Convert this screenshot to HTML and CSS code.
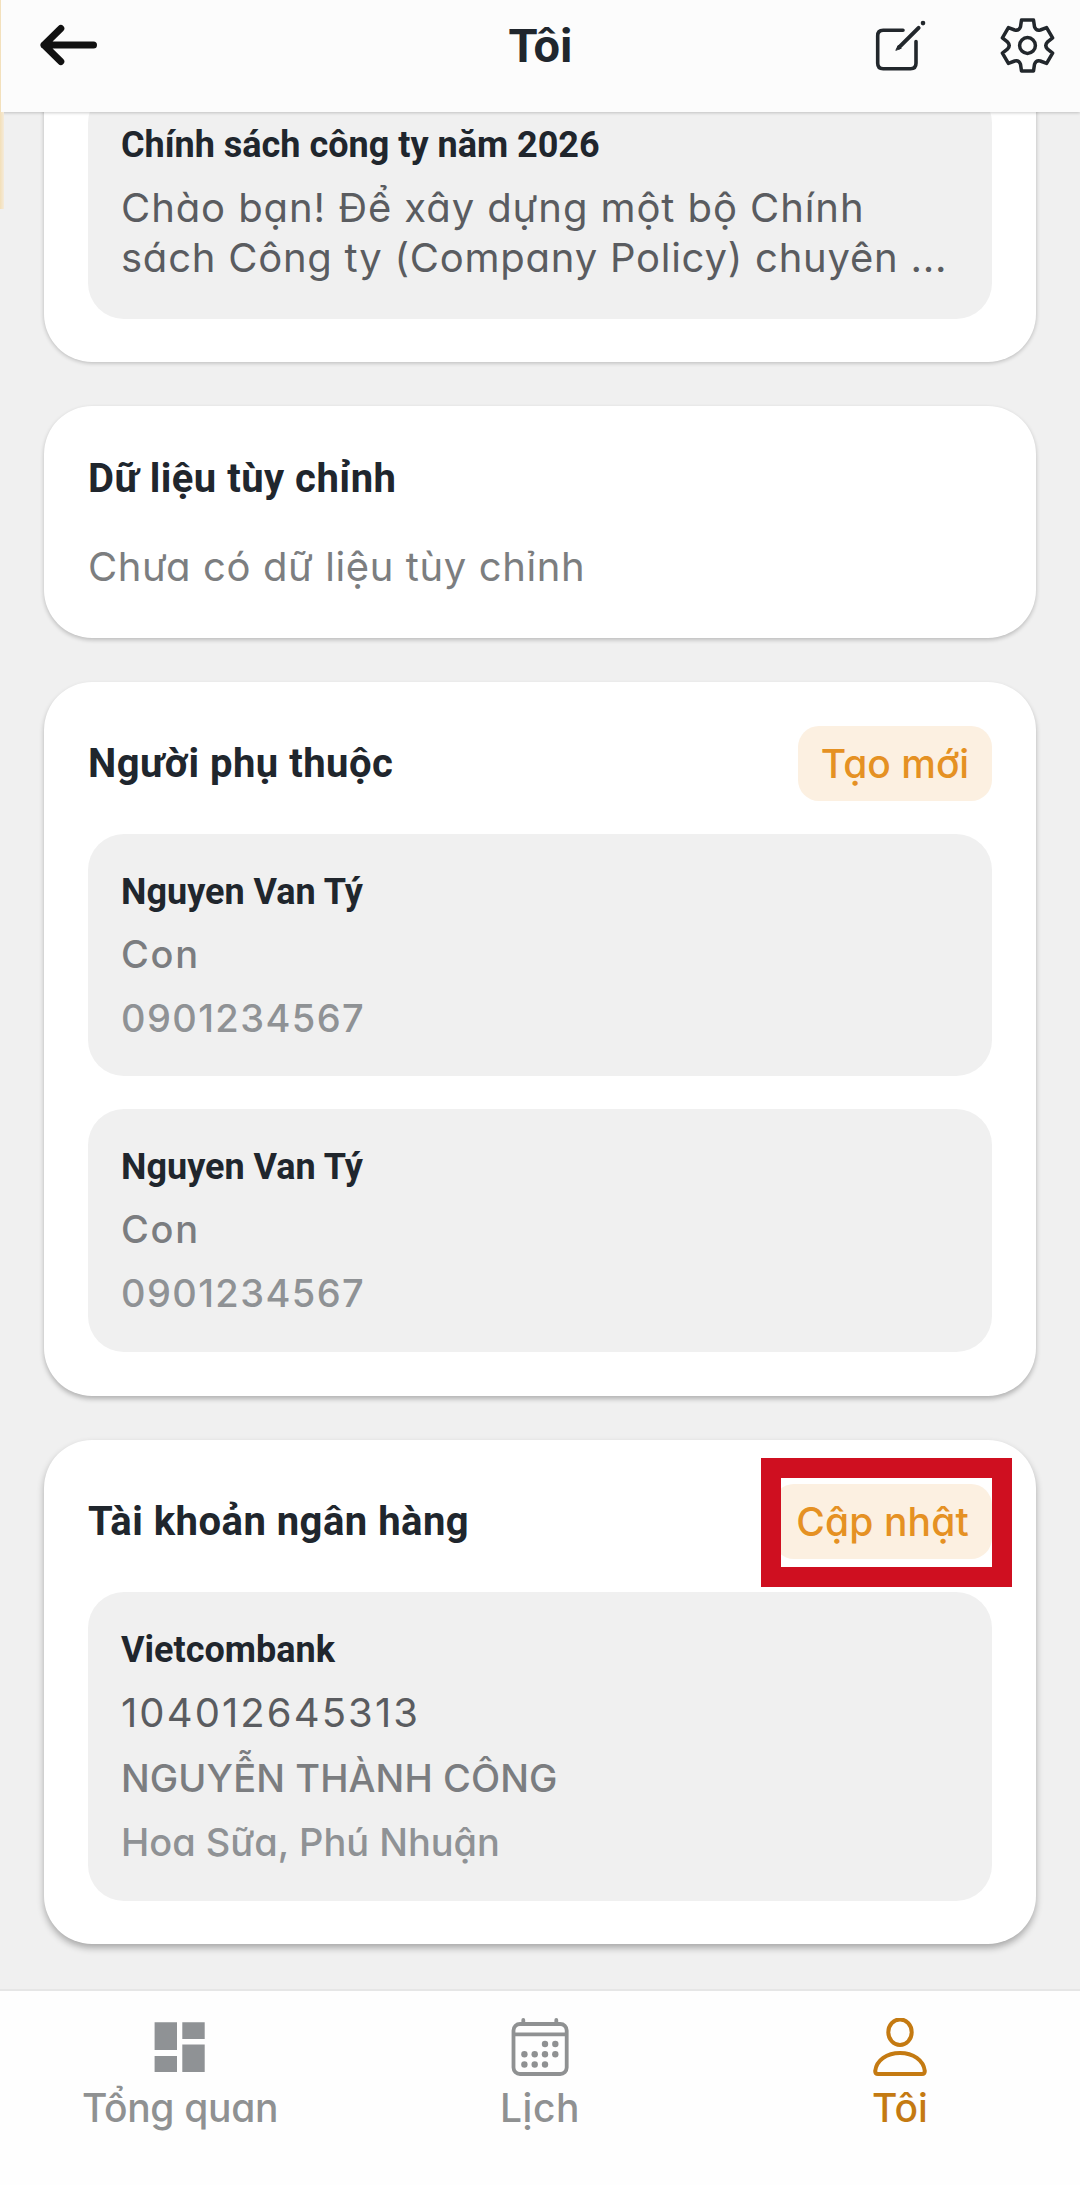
FILE: index.html
```html
<!DOCTYPE html>
<html lang="vi">
<head>
<meta charset="utf-8">
<title>Tôi</title>
<link rel="stylesheet" href="styles.css">
</head>
<body>
<div class="screen">
  <header class="header">
    <svg class="icon back" viewBox="0 0 60 60" fill="none" stroke="#111" stroke-width="7" stroke-linecap="round" stroke-linejoin="round"><path d="M55.5 30H6M22.8 13.5L6 30L22.8 46.5"/></svg>
    <h1 class="header-title">Tôi</h1>
    <div class="header-actions">
      <svg class="icon" viewBox="0 0 60 60" fill="none" stroke="#22272c" stroke-width="3.6" stroke-linecap="round" stroke-linejoin="round"><path d="M33 15.3H13.2Q7.7 15.3 7.7 20.8V48.2Q7.7 53.7 13.2 53.7H40.5Q46 53.7 46 48.2V26.5"/><path d="M29 32.3L48.6 12.8" stroke-width="4"/><path d="M26 35L28.3 30.3L31 33Z" stroke-width="1" fill="#22272c"/><path d="M53 8.1H53.01" stroke-width="4.6"/></svg>
      <svg class="icon" viewBox="-30.5 -30.5 60 60" fill="none" stroke="#22272c" stroke-width="3.5" stroke-linejoin="round"><path d="M-6-25.5L6-25.5L7-18.8Q8.4-14.6 12.8-15.5L19.1-17.9L25.1-7.6L19.8-3.3Q16.8 0 19.8 3.3L25.1 7.6L19.1 17.9L12.8 15.5Q8.4 14.6 7 18.8L6 25.5L-6 25.5L-7 18.8Q-8.4 14.6-12.8 15.5L-19.1 17.9L-25.1 7.6L-19.8 3.3Q-16.8 0-19.8-3.3L-25.1-7.6L-19.1-17.9L-12.8-15.5Q-8.4-14.6-7-18.8Z"/><circle r="7.9"/></svg>
    </div>
  </header>

  <main class="content">
    <section class="card policy">
      <article class="item">
        <h3 class="item-title">Chính sách công ty năm 2026</h3>
        <p class="policy-text"><span class="line-a">Chào bạn! Để xây dựng một bộ Chính</span><br><span class="line-b">sách Công ty (Company Policy) chuyên ...</span></p>
      </article>
    </section>

    <section class="card custom">
      <h2 class="card-title">Dữ liệu tùy chỉnh</h2>
      <p class="empty">Chưa có dữ liệu tùy chỉnh</p>
    </section>

    <section class="card dependents">
      <div class="card-head">
        <h2 class="card-title">Người phụ thuộc</h2>
        <div class="action create">Tạo mới</div>
      </div>
      <article class="item person">
        <h3 class="item-title">Nguyen Van Tý</h3>
        <p class="relation">Con</p>
        <p class="phone">0901234567</p>
      </article>
      <article class="item person">
        <h3 class="item-title">Nguyen Van Tý</h3>
        <p class="relation">Con</p>
        <p class="phone">0901234567</p>
      </article>
    </section>

    <section class="card bank">
      <div class="card-head">
        <h2 class="card-title">Tài khoản ngân hàng</h2>
        <div class="action update marked">Cập nhật</div>
      </div>
      <article class="item account">
        <h3 class="item-title">Vietcombank</h3>
        <p class="number">104012645313</p>
        <p class="owner">NGUYỄN THÀNH CÔNG</p>
        <p class="branch">Hoa Sữa, Phú Nhuận</p>
      </article>
    </section>
  </main>

  <nav class="tabs">
    <div class="tab">
      <svg class="tab-icon" viewBox="0 0 60 60" fill="#8f9295"><path d="M4.600 4.300h22.400v27.700h-22.400zM32.300 4.300h22.400v16.700h-22.400zM4.600 38h22.400v16h-22.400zM32.300 26.500h22.400V54h-22.400z"/></svg>
      <span class="tab-label overview">Tổng quan</span>
    </div>
    <div class="tab">
      <svg class="tab-icon" viewBox="0 0 60 60" fill="none" stroke="#8f9192" stroke-width="3.8"><rect x="3.5" y="6" width="53.2" height="50" rx="6.5"/><path d="M3.5 16.3H56.7"/><path d="M13.3 6V2M46.3 6V2" stroke-linecap="round"/><g fill="#8f9192" stroke="none"><circle cx="35" cy="26" r="3.2"/><circle cx="45.3" cy="26" r="3.2"/><circle cx="14.4" cy="36.3" r="3.2"/><circle cx="24.7" cy="36.3" r="3.2"/><circle cx="35" cy="36.3" r="3.2"/><circle cx="45.3" cy="36.3" r="3.2"/><circle cx="14.4" cy="46.5" r="3.2"/><circle cx="24.7" cy="46.5" r="3.2"/><circle cx="35" cy="46.5" r="3.2"/></g></svg>
      <span class="tab-label calendar">Lịch</span>
    </div>
    <div class="tab active">
      <svg class="tab-icon" viewBox="0 0 60 60" fill="none" stroke="#c47a12" stroke-width="4" stroke-linejoin="round"><ellipse cx="30" cy="14.2" rx="11.7" ry="12.8"/><path d="M5.2 53Q5.2 56 8 56H52Q54.8 56 54.8 53C53.5 42 43 35 30 35S6.5 42 5.2 53Z"/></svg>
      <span class="tab-label">Tôi</span>
    </div>
  </nav>
  <div class="edge"></div>
</div>
</body>
</html>
```
FILE: styles.css
```css
* { box-sizing: border-box; }

body {
  margin: 0;
  background: #f0f0f0;
  font-family: Inter, "Noto Sans", sans-serif;
  font-feature-settings: "cv11";
}

h1, h2, h3, p { margin: 0; }

.screen {
  position: relative;
  display: flex;
  flex-direction: column;
  width: 1080px;
  height: 2185px;
  overflow: hidden;
}

/* Top bar */
.header {
  position: relative;
  z-index: 1;
  flex: none;
  display: grid;
  grid-template-columns: 1fr auto 1fr;
  align-items: start;
  height: 112px;
  padding: 15px 23px 0 38px;
  background: #fcfcfc;
  box-shadow: 0 1px 3px rgba(0, 0, 0, 0.2);
}

.icon { display: block; width: 60px; height: 60px; }

.header-title {
  margin-right: 14px;
  font: 700 47px/62px Roboto, sans-serif;
  color: #20262d;
}

.header-actions {
  display: flex;
  justify-content: flex-end;
  gap: 67px;
}

/* Scrolled content */
.content {
  flex: 1;
  min-height: 0;
  display: flex;
  flex-direction: column;
  gap: 44px;
  margin-top: -69px;
  padding: 0 44px;
}

.card {
  flex: none;
  padding: 44px;
  border-radius: 48px;
  background: #fff;
  box-shadow: 0 1px 4px rgba(0, 0, 0, 0.24);
}

.policy { height: 319px; }
.custom { height: 232px; padding-top: 49px; box-shadow: 0 2px 4px rgba(0, 0, 0, 0.22); }
.dependents { height: 714px; box-shadow: 0 3px 5px rgba(0, 0, 0, 0.26); }
.bank { height: 504px; box-shadow: 0 4px 7px rgba(0, 0, 0, 0.3); }

.card-head {
  display: flex;
  justify-content: space-between;
  align-items: center;
  height: 75px;
  margin-bottom: 33px;
}

.card-title {
  font: 700 40px/48px Roboto, sans-serif;
  letter-spacing: 0.48px;
  color: #20262d;
}

.empty {
  margin-top: 39px;
  font-size: 40px;
  line-height: 50px;
  letter-spacing: 0.6px;
  color: #7c7e80;
}

.action {
  position: relative;
  height: 75px;
  border-radius: 21px;
  background: #fcf0e1;
  font-size: 39px;
  font-weight: 500;
  line-height: 75px;
  text-align: center;
  color: #e59123;
}

.create { width: 194px; }
.update { width: 219px; letter-spacing: 0.15px; }

.marked::after {
  content: "";
  position: absolute;
  inset: -26px -20px -28px -12px;
  border: 20px solid #cf0f20;
}

/* Grey entries inside the cards */
.item {
  padding: 32px 33px 0;
  border-radius: 36px;
  background: #f0f0f0;
  white-space: nowrap;
}

.item-title {
  font: 700 36px/52px Roboto, sans-serif;
  color: #20262d;
}

.policy .item { height: 232px; }

.policy-text {
  margin-top: 12px;
  font-size: 40px;
  line-height: 50px;
  color: #5a5c60;
}

.line-a { letter-spacing: 0.92px; }
.line-b { letter-spacing: 0.76px; }

.person { height: 242px; }
.person + .person { height: 243px; margin-top: 33px; }

.relation, .phone {
  font-size: 38px;
  font-weight: 450;
  line-height: 64px;
}

.relation { margin-top: 4px; letter-spacing: 1.7px; color: #7b7d80; }
.phone { letter-spacing: 1.4px; color: #8f9295; }

.account { height: 309px; }

.number {
  margin-top: 4px;
  font-size: 40px;
  line-height: 66px;
  letter-spacing: 2.1px;
  color: #5a5c60;
}

.owner {
  font-size: 38px;
  font-weight: 450;
  line-height: 65px;
  letter-spacing: 0.1px;
  color: #7b7d80;
}

.branch {
  font-size: 38px;
  font-weight: 450;
  line-height: 62px;
  letter-spacing: -0.02px;
  color: #8f9295;
}

/* Bottom tabs */
.tabs {
  position: relative;
  flex: none;
  display: grid;
  grid-template-columns: repeat(3, 1fr);
  height: 196px;
  border-top: 2px solid #e6e6e6;
  background: #fefefe;
}

.tab {
  display: flex;
  flex-direction: column;
  align-items: center;
  padding-top: 27px;
  color: #8f9192;
}

.tab.active { color: #c47a12; }
.tab-icon { width: 60px; height: 60px; }

.tab-label {
  margin-top: 5px;
  font-size: 39px;
  font-weight: 500;
  line-height: 50px;
}

.overview { letter-spacing: -0.33px; }
.calendar { letter-spacing: 0.5px; }

/* Sliver of the previous page at the left edge */
.edge {
  position: absolute;
  z-index: 2;
  left: 0;
  top: 0;
  width: 4px;
  height: 209px;
  background: linear-gradient(#fcfcfc, #fcfcfc) 1px 0 / 3px 112px no-repeat, linear-gradient(90deg, #f3dfb8, #f5ebda);
}
```
